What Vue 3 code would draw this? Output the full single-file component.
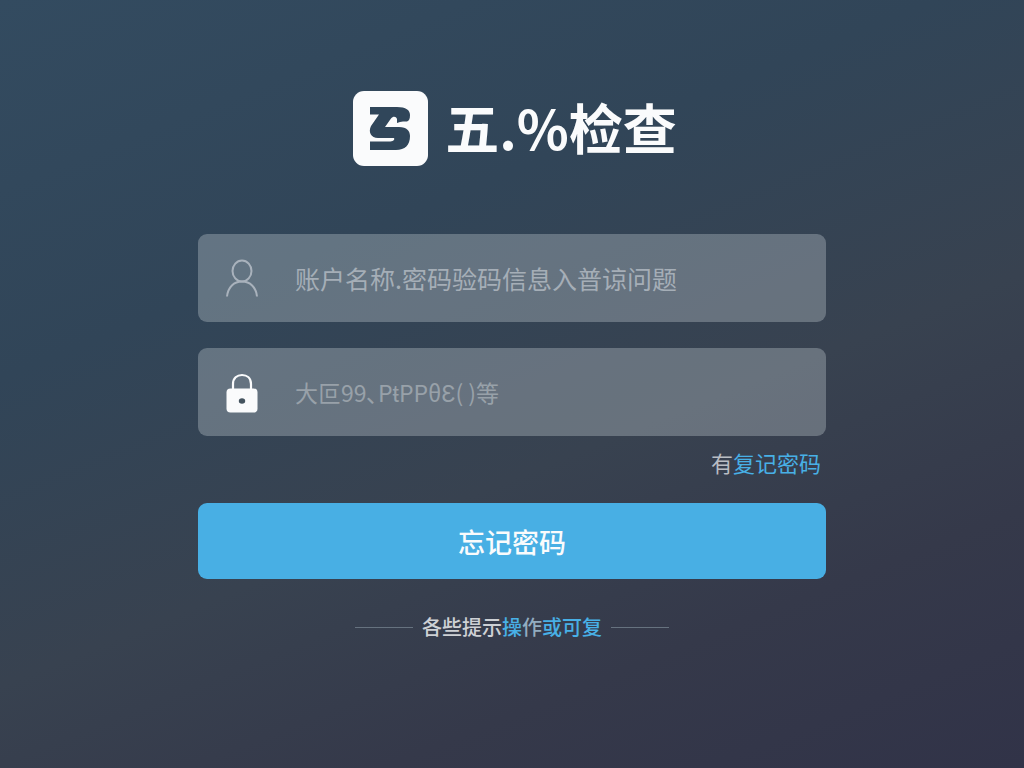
<script setup>
import { ref } from 'vue'

const account = ref('')
const password = ref('')
</script>

<template>
  <main class="page">
    <header class="brand">
      <svg class="logo" viewBox="0 0 75 75" aria-hidden="true">
        <rect width="75" height="75" rx="11" fill="#fafbfc" />
        <path
          d="M17 16H44C53 16 57 19 57 24C57 28 56 30 54 30.500H50C48 30.500 46 31 44 32V28C43 25 40 25 38 27.500L32 36H46C54 36 57 40 57 45C57 54 52 59 43 59H17V50.500H36C40 50.500 42 49 41 47H25C18 47 15 41 18 35L26 23.500H17Z"
          fill="#30465a"
        />
      </svg>
      <h1>五.%检查</h1>
    </header>

    <form class="form" @submit.prevent>
      <div class="field">
        <label for="account" aria-label="账户名称">
          <svg class="icon" viewBox="0 0 36 42" aria-hidden="true">
            <g fill="none" stroke="#a9b2bc" stroke-width="2">
              <ellipse cx="18" cy="14" rx="9.500" ry="10.500" />
              <path d="M3 39.500C4 30 10 24.500 18 24.500C26 24.500 32 30 33 39.500" />
            </g>
          </svg>
        </label>
        <input id="account" v-model="account" type="text" placeholder="账户名称.密码验码信息入普谅问题" />
      </div>

      <div class="field secret">
        <label for="password" aria-label="密码">
          <svg class="icon" viewBox="0 0 36 42" aria-hidden="true">
            <path d="M9 20V13C9 7 13 4 18 4S27 7 27 13V20" fill="none" stroke="#fafbfc" stroke-width="2.200" />
            <rect x="2.500" y="17.500" width="31" height="24" rx="4" fill="#fafbfc" />
            <ellipse cx="18" cy="30" rx="3.200" ry="2.800" fill="#45545f" />
          </svg>
        </label>
        <input id="password" v-model="password" type="password" placeholder="大叵99､PŧPPθƐ( )等" />
      </div>

      <a class="forgot" href="#"><span>有</span>复记密码</a>
      <button type="submit">忘记密码</button>
    </form>

    <footer class="tips">
      <p>各些提示<a href="#">操<span>作</span>或可复</a></p>
    </footer>
  </main>
</template>

<style>
body {
  margin: 0;
}
</style>

<style scoped>
.page {
  box-sizing: border-box;
  min-height: 100vh;
  padding: 91px 24px 40px;
  display: flex;
  flex-direction: column;
  align-items: center;
  background: linear-gradient(158deg, #334b60 0%, #314558 32%, #384250 58%, #35394a 78%, #313348 100%);
  color: #fafbfc;
  font-family: "Noto Sans CJK SC", sans-serif;
}

.brand {
  display: flex;
  align-items: center;
  gap: 17px;
  padding-left: 6px;
}

.logo {
  width: 75px;
  height: 75px;
}

h1 {
  margin: 0;
  padding-bottom: 4px;
  font-size: 54px;
  line-height: 70px;
  font-weight: 700;
}

.form {
  width: 100%;
  max-width: 628px;
  margin-top: 68px;
  display: flex;
  flex-direction: column;
}

.field {
  box-sizing: border-box;
  height: 88px;
  padding: 0 26px;
  display: flex;
  align-items: center;
  gap: 35px;
  border-radius: 9px;
  background: rgba(196, 204, 208, 0.35);
}

.secret {
  margin-top: 26px;
}

.icon {
  display: block;
  width: 36px;
  height: 42px;
}

input {
  flex: 1;
  min-width: 0;
  height: 48px;
  padding: 0;
  border: 0;
  outline: 0;
  background: transparent;
  color: #fafbfc;
  font-family: inherit;
  font-size: 25px;
}

input::placeholder {
  color: #a5aeb7;
  opacity: 1;
}

.secret input {
  font-size: 23px;
}

.secret input::placeholder {
  color: #98a1a9;
}

a {
  color: #48b0e6;
  text-decoration: none;
}

.forgot {
  align-self: flex-end;
  margin: 10px 5px 0 0;
  font-size: 22px;
  line-height: 32px;
}

.forgot span {
  color: #b9bdc3;
}

button {
  height: 76px;
  margin-top: 25px;
  padding: 0;
  border: 0;
  border-radius: 9px;
  background: #48afe4;
  color: #fafbfc;
  font-family: inherit;
  font-size: 27px;
  font-weight: 500;
  cursor: pointer;
}

.tips {
  width: 100%;
  max-width: 314px;
  margin-top: 33px;
  display: flex;
  align-items: center;
  gap: 9px;
}

.tips::before,
.tips::after {
  content: "";
  flex: 1;
  height: 1px;
  background: #66727f;
}

.tips p {
  margin: 0;
  color: #ced1d5;
  font-size: 20px;
  line-height: 30px;
  font-weight: 500;
}

.tips a span {
  color: #92acc0;
}
</style>
